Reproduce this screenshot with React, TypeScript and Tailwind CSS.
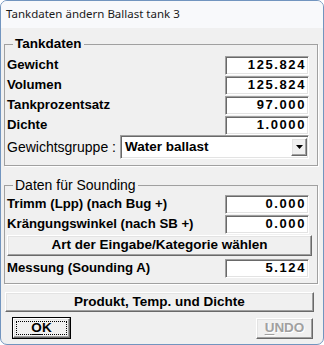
import React from "react";

const sunken =
	"border border-t-[#a0a0a0] border-l-[#a0a0a0] border-b-white border-r-white shadow-[inset_1px_1px_0_#696969,inset_-1px_-1px_0_#e3e3e3] bg-white";
const raised =
	"border border-t-white border-l-white border-b-[#696969] border-r-[#696969] shadow-[inset_-1px_-1px_0_#a0a0a0,inset_1px_1px_0_#e3e3e3] bg-[#f0f0f0]";

function ValueRow({ label, value }: { label: string; value: string }) {
	return (
		<div className="flex h-[20px] items-center justify-between">
			<span className="text-[13.2px] font-bold">{label}</span>
			<div
				className={`${sunken} flex h-[19px] w-[84px] items-center justify-end pr-[2px] text-[13px] font-bold tracking-[1.6px]`}
			>
				{value}
			</div>
		</div>
	);
}

function Group({ title, bold, children, className }: { title: string; bold?: boolean; children: React.ReactNode; className?: string }) {
	return (
		<fieldset
			className={`border border-[#a0a0a0] shadow-[1px_1px_0_#fff] ml-[3px] mr-[5px] pl-[2px] pr-[8px] ${className ?? ""}`}
		>
			<legend
				className={`ml-[6px] px-[2px] leading-[16px] ${bold ? "text-[13.5px] font-bold" : "text-[14px]"}`}
			>
				{title}
			</legend>
			{children}
		</fieldset>
	);
}

export default function App() {
	return (
		<div
			className="flex h-[345px] w-[324px] flex-col overflow-hidden rounded-[7px] border border-[#7295bf] bg-[#f0f0f0] text-black"
			style={{ fontFamily: '"Liberation Sans", Arial, sans-serif' }}
		>
			<div
				className="flex h-[27px] shrink-0 items-center bg-[#f8f9fb] pl-[5px] pb-[2px] text-[11.5px] text-[#1a1a1a]"
				style={{ fontFamily: '"Noto Sans", "Open Sans", sans-serif' }}
			>
				Tankdaten ändern Ballast tank 3
			</div>

			<Group title="Tankdaten" bold className="mt-[8px] pt-[3px] pb-[6px]">
				<ValueRow label="Gewicht" value="125.824" />
				<ValueRow label="Volumen" value="125.824" />
				<ValueRow label="Tankprozentsatz" value="97.000" />
				<ValueRow label="Dichte" value="1.0000" />
				<div className="flex h-[24px] items-center">
					<span className="text-[14px]">Gewichtsgruppe :</span>
					<div className={`${sunken} ml-auto flex h-[24px] w-[189px] items-center pl-[4px] pr-[1px]`}>
						<span className="flex-1 text-[13.5px] font-bold">Water ballast</span>
						<div className={`${raised} flex h-[18px] w-[16px] items-center justify-center`}>
							<svg width="7" height="4" viewBox="0 0 7 4">
								<path d="M0 0h7L3.5 4z" fill="#000" />
							</svg>
						</div>
					</div>
				</div>
			</Group>

			<Group title="Daten für Sounding" className="mt-[11px] pt-[1px] pb-[5px]">
				<ValueRow label="Trimm (Lpp) (nach Bug +)" value="0.000" />
				<ValueRow label="Krängungswinkel (nach SB +)" value="0.000" />
				<button
					className={`${raised} mr-[-3px] mt-[1px] flex h-[21px] w-[calc(100%+3px)] items-center justify-center text-[13.5px] font-bold`}
				>
					Art der Eingabe/Kategorie wählen
				</button>
				<div className="mt-[2px]">
					<ValueRow label="Messung (Sounding A)" value="5.124" />
				</div>
			</Group>

			<div className="mt-[8px] flex pl-[4px] pr-[9px]">
				<button
					className={`${raised} flex h-[20px] w-full items-center justify-center text-[13.5px] font-bold`}
				>
					Produkt, Temp. und Dichte
				</button>
			</div>

			<div className="mt-[5px] flex items-start justify-between pl-[11px] pr-[10px]">
				<button className="flex h-[22px] w-[59px] border border-black p-0">
					<div className={`${raised} flex h-full w-full items-center justify-center p-[2px]`}>
						<div className="flex h-full w-full items-center justify-center border border-dotted border-black text-[13.5px] font-bold">
							<span className="underline underline-offset-[2px]">O</span>K
						</div>
					</div>
				</button>
				<button
					disabled
					className={`${raised} mt-[1px] flex h-[21px] w-[57px] items-center justify-center text-[13.5px] font-bold text-[#a0a0a0] [text-shadow:1px_1px_0_#fff]`}
				>
					<span className="underline underline-offset-[2px]">U</span>NDO
				</button>
			</div>
		</div>
	);
}
